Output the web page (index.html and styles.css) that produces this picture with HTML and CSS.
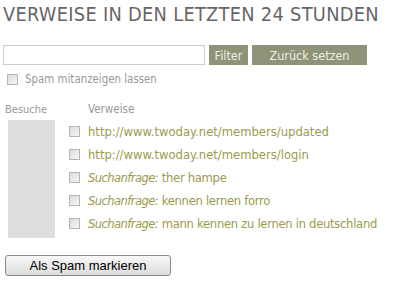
FILE: index.html
```html
<!DOCTYPE html>
<html>
<head>
<meta charset="utf-8">
<link rel="stylesheet" href="styles.css">
</head>
<body>
<h1 class="title">VERWEISE IN DEN LETZTEN 24 STUNDEN</h1>
<div class="filter">
  <input class="field" type="text">
  <span class="btn btn-filter">Filter</span>
  <span class="btn btn-reset">Zurück setzen</span>
</div>
<label class="spam"><span class="cb"></span>Spam mitanzeigen lassen</label>
<div class="table">
  <div class="col-visits">
    <div class="head">Besuche</div>
    <div class="bar"></div>
  </div>
  <div class="col-refs">
    <div class="head head-refs">Verweise</div>
    <div class="row"><span class="cb"></span><span class="link">http://www.twoday.net/members/updated</span></div>
    <div class="row"><span class="cb"></span><span class="link">http://www.twoday.net/members/login</span></div>
    <div class="row"><span class="cb"></span><span class="link"><em>Suchanfrage:</em> <span class="query">ther hampe</span></span></div>
    <div class="row"><span class="cb"></span><span class="link"><em>Suchanfrage:</em> <span class="query">kennen lernen forro</span></span></div>
    <div class="row"><span class="cb"></span><span class="link"><em>Suchanfrage:</em> <span class="query">mann kennen zu lernen in deutschland</span></span></div>
  </div>
</div>
<div class="actions"><span class="spam-btn">Als Spam markieren</span></div>
</body>
</html>
```
FILE: styles.css
```css
html, body { margin: 0; padding: 0; background: #fff; }
body {
  font-family: "DejaVu Sans", sans-serif;
  font-stretch: semi-condensed;
  padding: 0 3px;
  width: 394px;
}
.title {
  margin: 0;
  padding-top: 5px;
  font-size: 19.8px;
  font-weight: normal;
  line-height: 20px;
  color: #666;
  letter-spacing: 0.3px;
  white-space: nowrap;
}
.filter {
  display: flex;
  gap: 4px;
  margin-top: 20px;
  height: 20px;
}
.field {
  box-sizing: border-box;
  width: 202px;
  height: 20px;
  margin: 0;
  border: 1px solid #ccc;
  padding: 0;
}
.btn {
  display: flex;
  align-items: center;
  justify-content: center;
  height: 20px;
  background: #8f9479;
  color: #eceee2;
  font-size: 12.5px;
}
.btn-filter { width: 39px; }
.btn-reset { width: 115px; }
.spam {
  display: flex;
  align-items: center;
  gap: 7px;
  margin-top: 8px;
  padding-left: 4px;
  font-size: 11.4px;
  color: #999;
  height: 12px;
}
.cb {
  box-sizing: border-box;
  width: 11px;
  height: 11px;
  border: 1px solid #b5b5b5;
  background: linear-gradient(135deg, #dcdcdc, #f6f6f6);
  flex: none;
}
.table {
  display: flex;
  margin-top: 17px;
}
.col-visits { width: 66px; flex: none; display: flex; flex-direction: column; }
.head {
  font-size: 11px;
  color: #999;
  height: 15px;
  line-height: 15px;
}
.col-visits .head { padding-left: 2px; }
.bar {
  margin-top: 3px;
  margin-left: 5px;
  width: 47px;
  height: 118px;
  background: #dedede;
}
.head-refs { padding-left: 19px; font-size: 11.5px; }
.col-refs { display: flex; flex-direction: column; }
.row {
  display: flex;
  align-items: center;
  gap: 8px;
  height: 23px;
  white-space: nowrap;
}
.col-refs .head + .row { margin-top: 3px; }
.link {
  font-size: 12.9px;
  color: #9d9b4d;
}
.link em { font-style: italic; letter-spacing: -0.6px; }
.query { letter-spacing: -0.3px; }
.actions { margin-top: 17px; padding-left: 2px; }
.spam-btn {
  box-sizing: border-box;
  display: flex;
  align-items: center;
  justify-content: center;
  width: 166px;
  height: 21px;
  border: 1px solid #8a8a8a;
  border-radius: 3px;
  background: linear-gradient(#f8f8f8, #dcdcdc);
  font-family: "Liberation Sans", Arial, sans-serif;
  font-size: 13px;
  color: #000;
}
```
